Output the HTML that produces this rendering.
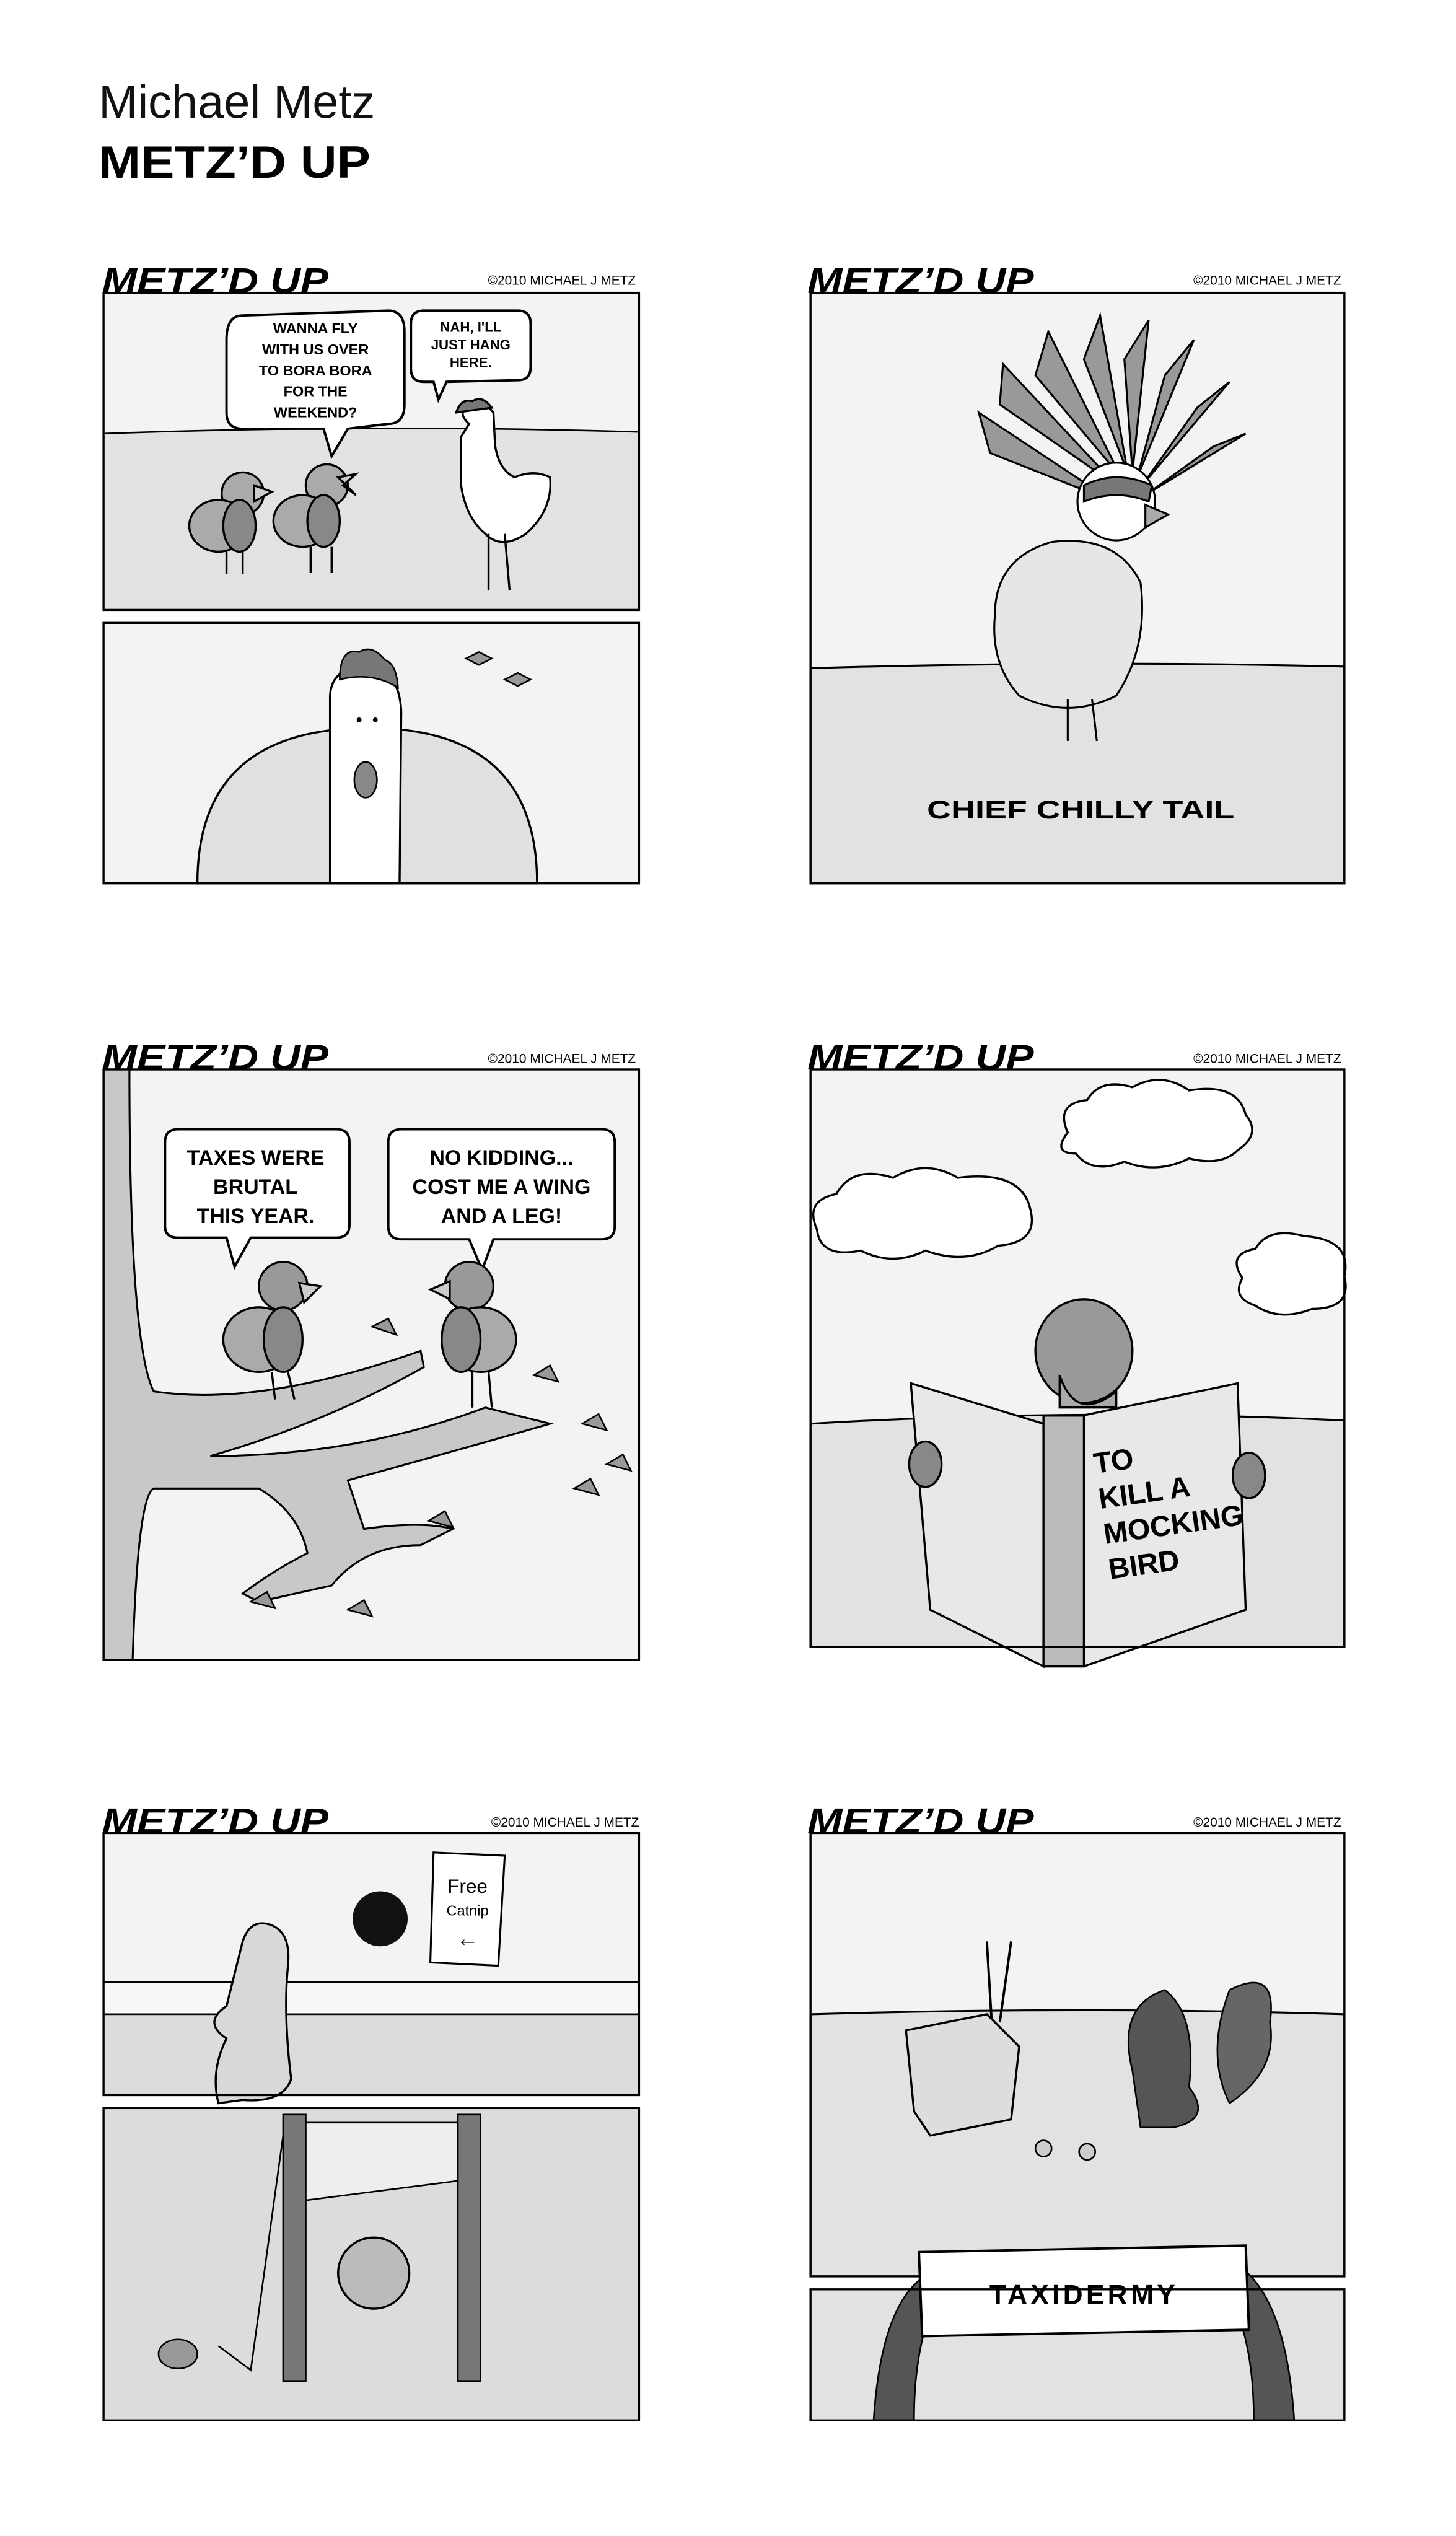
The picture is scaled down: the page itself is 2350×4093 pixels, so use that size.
<!DOCTYPE html>
<html><head><meta charset="utf-8"><style>
html,body{margin:0;padding:0;background:#fff}
svg{display:block}
.h{font-family:"Liberation Sans",sans-serif}
.c{font-family:"Liberation Sans",sans-serif;font-weight:bold;font-style:italic}
.s{font-family:"Liberation Sans",sans-serif;font-weight:bold}
</style></head><body>
<svg width="2350" height="4093" viewBox="0 0 900 1567.5" preserveAspectRatio="none" xmlns="http://www.w3.org/2000/svg">
<rect width="900" height="1568" fill="#fff"/>
<text x="61" y="73" class="h" font-size="29" fill="#111">Michael Metz</text>
<text x="61" y="110" class="h" font-size="28" font-weight="bold" fill="#000" textLength="168" lengthAdjust="spacingAndGlyphs">METZ’D UP</text>

<!-- Panel 1 -->
<rect x="64" y="181" width="331" height="196" fill="#f3f3f3"/>
<path d="M64 268 Q230 262 395 267 L395 377 L64 377Z" fill="#e2e2e2" stroke="#000" stroke-width="1"/>
<path d="M150 195 Q140 195 140 210 L140 255 Q140 265 150 265 L200 265 L205 282 L215 265 L240 262 Q250 262 250 250 L250 205 Q250 192 240 192Z" fill="#fff" stroke="#000" stroke-width="1.5"/>
<text class="s" font-size="9" text-anchor="middle" fill="#000"><tspan x="195" y="206">WANNA FLY</tspan><tspan x="195" y="219">WITH US OVER</tspan><tspan x="195" y="232">TO BORA BORA</tspan><tspan x="195" y="245">FOR THE</tspan><tspan x="195" y="258">WEEKEND?</tspan></text>
<path d="M262 192 Q254 192 254 200 L254 228 Q254 236 262 236 L268 236 L271 247 L276 236 L320 235 Q328 235 328 227 L328 200 Q328 192 320 192Z" fill="#fff" stroke="#000" stroke-width="1.5"/>
<text class="s" font-size="8.5" text-anchor="middle"><tspan x="291" y="205">NAH, I'LL</tspan><tspan x="291" y="216">JUST HANG</tspan><tspan x="291" y="227">HERE.</tspan></text>
<g stroke="#000" stroke-width="1.3">
<circle cx="150" cy="305" r="13" fill="#aaa"/><ellipse cx="135" cy="325" rx="18" ry="16" fill="#aaa"/><ellipse cx="148" cy="325" rx="10" ry="16" fill="#888"/>
<path d="M157 300 L168 304 L157 310Z" fill="#ccc"/><path d="M140 340 L140 355 M150 340 L150 355" fill="none"/>
<circle cx="202" cy="300" r="13" fill="#aaa"/><ellipse cx="187" cy="322" rx="18" ry="16" fill="#aaa"/><ellipse cx="200" cy="322" rx="10" ry="16" fill="#888"/>
<path d="M209 295 L220 293 L212 300 L220 306Z" fill="#ccc"/><path d="M192 338 L192 354 M205 338 L205 354" fill="none"/>
<path d="M290 262 Q282 255 290 250 Q298 246 305 255 L306 275 Q308 290 318 295 Q330 290 340 295 Q342 315 325 330 Q310 340 300 330 Q288 320 285 300 L285 270Z" fill="#fff"/>
<path d="M282 255 Q285 246 292 248 Q298 244 304 252Z" fill="#777"/>
<path d="M302 330 L302 365 M312 330 L315 365" fill="none"/>
</g>
<rect x="64" y="181" width="331" height="196" fill="none" stroke="#000" stroke-width="1.3"/>

<!-- Panel 2 -->
<rect x="64" y="385" width="331" height="161" fill="#f3f3f3"/>
<path d="M122 546 Q122 450 228 450 Q332 450 332 546Z" fill="#e0e0e0" stroke="#000" stroke-width="1.3"/>
<path d="M204 546 L204 430 Q205 412 227 412 Q247 414 248 440 L247 546Z" fill="#fff" stroke="#000" stroke-width="1.3"/>
<path d="M210 420 Q210 400 222 403 Q230 398 238 408 Q245 410 246 425 Q230 415 210 420Z" fill="#777" stroke="#000"/>
<ellipse cx="226" cy="482" rx="7" ry="11" fill="#888" stroke="#000"/>
<circle cx="222" cy="445" r="1.5" fill="#000"/><circle cx="232" cy="445" r="1.5" fill="#000"/>
<g fill="#999" stroke="#000" stroke-width="1"><path d="M288 407 l8 -4 l8 4 l-8 4z"/><path d="M312 420 l8 -4 l8 4 l-8 4z"/></g>
<rect x="64" y="385" width="331" height="161" fill="none" stroke="#000" stroke-width="1.3"/>

<!-- Right 1 -->
<rect x="501" y="181" width="330" height="365" fill="#f3f3f3"/>
<path d="M501 413 Q670 408 831 412 L831 546 L501 546Z" fill="#e2e2e2" stroke="#000" stroke-width="1.2"/>
<g stroke="#000" stroke-width="1.2">
<g fill="#999">
<path d="M688 310 L605 255 L612 280Z"/><path d="M690 300 L620 225 L618 250Z"/><path d="M693 295 L648 205 L640 232Z"/><path d="M697 292 L680 195 L670 222Z"/><path d="M700 292 L710 198 L695 222Z"/><path d="M703 295 L738 210 L720 232Z"/><path d="M706 300 L760 236 L740 252Z"/><path d="M708 306 L770 268 L750 276Z"/>
</g>
<path d="M615 380 Q615 345 650 335 Q690 330 705 360 Q710 400 690 430 Q660 445 630 430 Q612 410 615 380Z" fill="#e6e6e6"/>
<circle cx="690" cy="310" r="24" fill="#fff"/>
<path d="M670 300 Q690 290 712 300 L710 310 Q690 302 670 310Z" fill="#777"/>
<path d="M708 312 L722 318 L708 326Z" fill="#aaa"/>
<path d="M660 432 L660 458 M675 432 L678 458" fill="none"/>
</g>
<text x="668" y="506" class="s" font-size="16" text-anchor="middle" textLength="190" lengthAdjust="spacingAndGlyphs">CHIEF CHILLY TAIL</text>
<rect x="501" y="181" width="330" height="365" fill="none" stroke="#000" stroke-width="1.3"/>

<!-- Row2 left -->
<rect x="64" y="661" width="331" height="365" fill="#f3f3f3"/>
<g fill="#c8c8c8" stroke="#000" stroke-width="1.2">
<path d="M64 661 L80 661 Q80 830 95 860 Q160 870 260 835 L262 845 Q200 880 130 900 Q220 900 300 870 L340 880 Q270 900 215 915 L225 945 Q260 940 280 945 L260 955 Q225 955 205 980 L160 990 L150 985 Q170 970 190 960 Q185 935 160 920 L95 920 Q85 925 82 1026 L64 1026Z"/>
</g>
<g fill="#999" stroke="#000" stroke-width="1">
<path d="M230 820 l10 -5 l5 10z"/><path d="M330 850 l10 -6 l5 10z"/><path d="M360 880 l10 -6 l5 10z"/><path d="M355 920 l10 -6 l5 10z"/><path d="M265 940 l10 -6 l5 10z"/><path d="M155 990 l10 -6 l5 10z"/><path d="M215 995 l10 -6 l5 10z"/><path d="M375 905 l10 -6 l5 10z"/>
</g>
<path d="M110 698 Q102 698 102 706 L102 758 Q102 765 110 765 L140 765 L145 783 L155 765 L208 765 Q216 765 216 757 L216 706 Q216 698 208 698Z" fill="#fff" stroke="#000" stroke-width="1.5"/>
<text class="s" font-size="13" text-anchor="middle"><tspan x="158" y="720">TAXES WERE</tspan><tspan x="158" y="738">BRUTAL</tspan><tspan x="158" y="756">THIS YEAR.</tspan></text>
<path d="M248 698 Q240 698 240 706 L240 758 Q240 766 248 766 L290 766 L298 785 L305 766 L372 766 Q380 766 380 758 L380 706 Q380 698 372 698Z" fill="#fff" stroke="#000" stroke-width="1.5"/>
<text class="s" font-size="13" text-anchor="middle"><tspan x="310" y="720">NO KIDDING...</tspan><tspan x="310" y="738">COST ME A WING</tspan><tspan x="310" y="756">AND A LEG!</tspan></text>
<g stroke="#000" stroke-width="1.3">
<circle cx="175" cy="795" r="15" fill="#999"/><ellipse cx="160" cy="828" rx="22" ry="20" fill="#aaa"/><ellipse cx="175" cy="828" rx="12" ry="20" fill="#888"/>
<path d="M185 793 L198 795 L188 805Z" fill="#ccc"/><path d="M168 848 L170 865 M178 848 L182 865" fill="none"/>
<circle cx="290" cy="795" r="15" fill="#999"/><ellipse cx="297" cy="828" rx="22" ry="20" fill="#aaa"/><ellipse cx="285" cy="828" rx="12" ry="20" fill="#888"/>
<path d="M278 792 L266 797 L278 803Z" fill="#ccc"/><path d="M292 848 L292 870 M302 848 L304 870" fill="none"/>
</g>
<rect x="64" y="661" width="331" height="365" fill="none" stroke="#000" stroke-width="1.3"/>

<!-- Row2 right -->
<rect x="501" y="661" width="330" height="357" fill="#f3f3f3"/>
<path d="M501 880 Q670 870 831 878 L831 1018 L501 1018Z" fill="#e2e2e2" stroke="#000" stroke-width="1.2"/>
<g fill="#fff" stroke="#000" stroke-width="1.3">
<path d="M660 700 q-8 -18 12 -20 q8 -14 28 -8 q18 -10 35 2 q30 -5 35 15 q10 12 -5 22 q-10 10 -30 5 q-20 10 -40 2 q-20 8 -30 -5 q-15 0 -5 -13z"/>
<path d="M505 760 q-8 -18 12 -22 q10 -18 35 -10 q20 -12 40 0 q40 -5 45 20 q5 20 -20 22 q-20 12 -45 3 q-20 10 -40 0 q-25 5 -27 -13z"/>
<path d="M768 790 q-10 -15 8 -18 q8 -14 30 -8 q30 2 25 25 q5 20 -20 20 q-20 8 -35 -2 q-15 -5 -8 -17z"/>
</g>
<g stroke="#000" stroke-width="1.3">
<ellipse cx="670" cy="835" rx="30" ry="32" fill="#999"/>
<path d="M655 850 Q665 880 690 860 L690 870 L655 870Z" fill="#aaa"/>
<path d="M563 855 L645 880 L645 1030 L575 995Z" fill="#e8e8e8"/>
<path d="M645 880 L765 855 L770 995 L670 1030 L645 1030Z" fill="#e8e8e8"/>
<rect x="645" y="875" width="25" height="155" fill="#bbb"/>
<ellipse cx="572" cy="905" rx="10" ry="14" fill="#888"/><ellipse cx="772" cy="912" rx="10" ry="14" fill="#888"/>
</g>
<text class="s" font-size="18" fill="#000" transform="rotate(-8 720 930)" font-weight="normal"><tspan x="680" y="905">TO</tspan><tspan x="680" y="927">KILL A</tspan><tspan x="680" y="949">MOCKING</tspan><tspan x="680" y="971">BIRD</tspan></text>
<rect x="501" y="661" width="330" height="357" fill="none" stroke="#000" stroke-width="1.3"/>

<!-- Row3 left A -->
<rect x="64" y="1133" width="331" height="162" fill="#f3f3f3"/>
<rect x="64" y="1225" width="331" height="20" fill="#f7f7f7" stroke="#000" stroke-width="1"/>
<rect x="64" y="1245" width="331" height="50" fill="#dcdcdc" stroke="#000" stroke-width="1"/>
<circle cx="235" cy="1186" r="17" fill="#111"/>
<path d="M268 1145 L312 1147 L308 1215 L266 1213Z" fill="#fff" stroke="#000" stroke-width="1.2"/>
<text x="289" y="1170" font-family="Liberation Sans,sans-serif" font-size="12" text-anchor="middle">Free</text>
<text x="289" y="1184" font-family="Liberation Sans,sans-serif" font-size="9" text-anchor="middle">Catnip</text>
<text x="289" y="1203" font-family="Liberation Sans,sans-serif" font-size="14" text-anchor="middle">←</text>
<path d="M150 1200 Q155 1185 168 1190 Q180 1195 178 1215 Q175 1245 180 1285 Q175 1300 150 1298 L135 1300 Q130 1280 140 1260 Q125 1250 140 1240 Q145 1220 150 1200Z" fill="#d8d8d8" stroke="#000" stroke-width="1.3"/>
<rect x="64" y="1133" width="331" height="162" fill="none" stroke="#000" stroke-width="1.3"/>
<!-- Row3 left B -->
<rect x="64" y="1303" width="331" height="193" fill="#dcdcdc"/>
<rect x="175" y="1307" width="14" height="165" fill="#777" stroke="#000"/>
<rect x="283" y="1307" width="14" height="165" fill="#777" stroke="#000"/>
<path d="M189 1312 L283 1312 L283 1348 L189 1360Z" fill="#eee" stroke="#000"/>
<circle cx="231" cy="1405" r="22" fill="#bbb" stroke="#000" stroke-width="1.3"/>
<ellipse cx="110" cy="1455" rx="12" ry="9" fill="#999" stroke="#000"/>
<path d="M175 1320 L155 1465 L135 1450" fill="none" stroke="#000"/>
<rect x="64" y="1303" width="331" height="193" fill="none" stroke="#000" stroke-width="1.3"/>

<!-- Row3 right A -->
<rect x="501" y="1133" width="330" height="274" fill="#f3f3f3"/>
<path d="M501 1245 Q670 1240 831 1245 L831 1407 L501 1407Z" fill="#e2e2e2" stroke="#000" stroke-width="1.2"/>
<path d="M610 1200 L613 1250 M625 1200 L618 1250" stroke="#000" stroke-width="1.5"/>
<path d="M560 1255 L610 1245 L630 1265 L625 1310 L575 1320 L565 1305Z" fill="#ddd" stroke="#000" stroke-width="1.3"/>
<path d="M700 1280 Q690 1240 720 1230 Q740 1245 735 1290 Q750 1310 725 1315 L705 1315 Z" fill="#555" stroke="#000"/>
<path d="M760 1230 Q790 1215 785 1250 Q790 1280 760 1300 Q745 1270 760 1230Z" fill="#666" stroke="#000"/>
<g fill="#ccc" stroke="#000"><circle cx="645" cy="1328" r="5"/><circle cx="672" cy="1330" r="5"/></g>
<rect x="501" y="1133" width="330" height="274" fill="none" stroke="#000" stroke-width="1.3"/>
<!-- Row3 right B -->
<rect x="501" y="1415" width="330" height="81" fill="#e2e2e2"/>
<path d="M540 1496 Q545 1420 575 1405 L585 1410 Q565 1440 565 1496Z" fill="#555" stroke="#000"/>
<path d="M800 1496 Q795 1420 765 1400 L755 1410 Q775 1440 775 1496Z" fill="#555" stroke="#000"/>
<path d="M568 1392 L770 1388 L772 1440 L570 1444Z" fill="#fff" stroke="#000" stroke-width="1.5"/>
<text x="670" y="1424" class="s" font-size="17" text-anchor="middle" font-weight="normal" letter-spacing="2">TAXIDERMY</text>
<rect x="501" y="1415" width="330" height="81" fill="none" stroke="#000" stroke-width="1.3"/>

<g id="titles" fill="#000">
<text x="63" y="181" class="c" font-size="22" textLength="140" lengthAdjust="spacingAndGlyphs">METZ’D UP</text>
<text x="393" y="176" class="h" font-size="8" text-anchor="end">©2010 MICHAEL J METZ</text>
<text x="499" y="181" class="c" font-size="22" textLength="140" lengthAdjust="spacingAndGlyphs">METZ’D UP</text>
<text x="829" y="176" class="h" font-size="8" text-anchor="end">©2010 MICHAEL J METZ</text>
<text x="63" y="661" class="c" font-size="22" textLength="140" lengthAdjust="spacingAndGlyphs">METZ’D UP</text>
<text x="393" y="657" class="h" font-size="8" text-anchor="end">©2010 MICHAEL J METZ</text>
<text x="499" y="661" class="c" font-size="22" textLength="140" lengthAdjust="spacingAndGlyphs">METZ’D UP</text>
<text x="829" y="657" class="h" font-size="8" text-anchor="end">©2010 MICHAEL J METZ</text>
<text x="63" y="1133" class="c" font-size="22" textLength="140" lengthAdjust="spacingAndGlyphs">METZ’D UP</text>
<text x="395" y="1129" class="h" font-size="8" text-anchor="end">©2010 MICHAEL J METZ</text>
<text x="499" y="1133" class="c" font-size="22" textLength="140" lengthAdjust="spacingAndGlyphs">METZ’D UP</text>
<text x="829" y="1129" class="h" font-size="8" text-anchor="end">©2010 MICHAEL J METZ</text>
</g>
</svg>
</body></html>
